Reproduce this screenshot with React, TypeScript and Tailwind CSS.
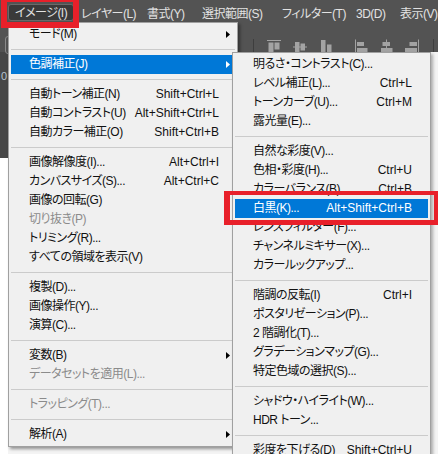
import clsx from 'clsx';

type Entry =
  | { sep: true }
  | {
      sep?: false;
      label: string;
      shortcut?: string;
      sub?: boolean;
      disabled?: boolean;
      active?: boolean;
    };

// menu bar titles with the width each one takes
const MENUBAR: [string, string][] = [
  ['イメージ(I)', 'w-[66px]'],
  ['レイヤー(L)', 'w-[66px]'],
  ['書式(Y)', 'w-[55px]'],
  ['選択範囲(S)', 'w-[80px]'],
  ['フィルター(T)', 'w-[74px]'],
  ['3D(D)', 'w-[44px]'],
  ['表示(V)', 'w-[60px]'],
];

const IMAGE_MENU: Entry[] = [
  { label: 'モード(M)', sub: true },
  { sep: true },
  { label: '色調補正(J)', sub: true, active: true },
  { sep: true },
  { label: '自動トーン補正(N)', shortcut: 'Shift+Ctrl+L' },
  { label: '自動コントラスト(U)', shortcut: 'Alt+Shift+Ctrl+L' },
  { label: '自動カラー補正(O)', shortcut: 'Shift+Ctrl+B' },
  { sep: true },
  { label: '画像解像度(I)...', shortcut: 'Alt+Ctrl+I' },
  { label: 'カンバスサイズ(S)...', shortcut: 'Alt+Ctrl+C' },
  { label: '画像の回転(G)' },
  { label: '切り抜き(P)', disabled: true },
  { label: 'トリミング(R)...' },
  { label: 'すべての領域を表示(V)' },
  { sep: true },
  { label: '複製(D)...' },
  { label: '画像操作(Y)...' },
  { label: '演算(C)...' },
  { sep: true },
  { label: '変数(B)', sub: true },
  { label: 'データセットを適用(L)...', disabled: true },
  { sep: true },
  { label: 'トラッピング(T)...', disabled: true },
  { sep: true },
  { label: '解析(A)', sub: true },
];

const ADJUST_MENU: Entry[] = [
  { label: '明るさ・コントラスト(C)...' },
  { label: 'レベル補正(L)...', shortcut: 'Ctrl+L' },
  { label: 'トーンカーブ(U)...', shortcut: 'Ctrl+M' },
  { label: '露光量(E)...' },
  { sep: true },
  { label: '自然な彩度(V)...' },
  { label: '色相・彩度(H)...', shortcut: 'Ctrl+U' },
  { label: 'カラーバランス(B)...', shortcut: 'Ctrl+B' },
  { label: '白黒(K)...', shortcut: 'Alt+Shift+Ctrl+B', active: true },
  { label: 'レンズフィルター(F)...' },
  { label: 'チャンネルミキサー(X)...' },
  { label: 'カラールックアップ...' },
  { sep: true },
  { label: '階調の反転(I)', shortcut: 'Ctrl+I' },
  { label: 'ポスタリゼーション(P)...' },
  { label: '2 階調化(T)...' },
  { label: 'グラデーションマップ(G)...' },
  { label: '特定色域の選択(S)...' },
  { sep: true },
  { label: 'シャドウ・ハイライト(W)...' },
  { label: 'HDR トーン...' },
  { sep: true },
  { label: '彩度を下げる(D)', shortcut: 'Shift+Ctrl+U' },
  { label: '色の置き換え(R)...' },
];

function SubArrow({ light }: { light?: boolean }) {
  return (
    <svg width="4" height="7" viewBox="0 0 4 7" className="ml-[7px]">
      <path d="M0 0L4 3.5L0 7Z" fill={light ? '#ffffff' : '#000000'} />
    </svg>
  );
}

function MenuList({ items }: { items: Entry[] }) {
  return (
    <div className="flex flex-col">
      {items.map((item, i) => {
        if (item.sep) {
          return (
            <div key={i} className="flex h-[11px] items-center">
              <div className="h-px w-full bg-[#cbcbcb]" />
            </div>
          );
        }
        return (
          <div
            key={i}
            className={clsx(
              'flex h-[19px] items-center pl-[18px] leading-[19px] whitespace-nowrap',
              item.active ? 'bg-[#0078d7] text-white' : item.disabled ? 'text-[#8b8b8b]' : 'text-[#111111]',
            )}
          >
            <span className="flex-1 tracking-[-0.5px]">{item.label}</span>
            {item.shortcut && <span>{item.shortcut}</span>}
            <span className="flex w-[16px] items-center">{item.sub && <SubArrow light={item.active} />}</span>
          </div>
        );
      })}
    </div>
  );
}

// alignment buttons in the options bar
function AlignIcons() {
  const c = '#a3a3a3';
  return (
    <>
      <svg width="14" height="16" className="ml-[13px] shrink-0">
        <rect x="0" y="1" width="14" height="1" fill={c} />
        <rect x="1.5" y="3.5" width="5" height="12.5" fill={c} />
        <rect x="7.5" y="3.5" width="5" height="7" fill={c} />
      </svg>
      <svg width="14" height="16" className="ml-[12px] shrink-0">
        <rect x="2" y="3" width="4.5" height="11" fill={c} />
        <rect x="7.5" y="4.5" width="4.5" height="7" fill={c} />
        <rect x="0" y="7.5" width="14" height="1" fill={c} />
      </svg>
      <svg width="11" height="16" className="ml-[14px] shrink-0">
        <rect x="0" y="1" width="4.5" height="15" fill={c} />
        <rect x="6" y="5.5" width="4.5" height="10.5" fill={c} />
      </svg>
      <svg width="13" height="16" className="ml-[23px] shrink-0">
        <rect x="0" y="0.5" width="1" height="15.5" fill={c} />
        <rect x="2" y="3" width="7" height="4" fill={c} />
        <rect x="2" y="9" width="10.5" height="4" fill={c} />
      </svg>
      <svg width="12" height="16" className="ml-[13px] shrink-0">
        <rect x="1.5" y="3" width="7.5" height="4" fill={c} />
        <rect x="0" y="9" width="11.5" height="4" fill={c} />
        <rect x="5" y="0.5" width="1" height="15.5" fill={c} />
      </svg>
      <svg width="14" height="16" className="ml-[12px] shrink-0">
        <rect x="4.5" y="3" width="7.5" height="4" fill={c} />
        <rect x="0" y="9" width="12" height="4" fill={c} />
        <rect x="13" y="0.5" width="1" height="15.5" fill={c} />
      </svg>
    </>
  );
}

export default function App() {
  return (
    <div className="relative flex h-[454px] w-[438px] flex-col overflow-hidden bg-white text-[12px] [font-family:'Liberation_Sans','Noto_Sans_CJK_JP',sans-serif] [font-feature-settings:'palt']">
      {/* Menu bar */}
      <div className="flex h-[28px] shrink-0 items-center bg-[#535353] pl-[8px]">
        {MENUBAR.map(([m, w], i) => (
          <div
            key={m}
            className={clsx(
              'flex h-[17px] shrink-0 items-center whitespace-nowrap text-[#e2e2e2] tracking-[-0.5px]',
              w,
              i === 0 ? 'mb-[3px] rounded-[3px] border border-[#6a6a6a] bg-[#3a3a3a] pl-[6px]' : 'pl-[7px]',
            )}
          >
            {m}
          </div>
        ))}
      </div>

      {/* Options bar */}
      <div className="flex h-[24px] shrink-0 items-start bg-[#535353] pt-[11px]">
        <div className="ml-[5px] h-[18px] w-[26px] shrink-0 -translate-y-[3px] rounded-[3px] border border-[#8a8a8a]" />
        <div className="ml-[222px] h-[16px] w-px shrink-0 bg-[#3e3e3e]" />
        <AlignIcons />
        <div className="ml-[14px] h-[16px] w-px shrink-0 bg-[#3e3e3e]" />
      </div>

      {/* Workspace: ruler corner on the left, document beyond */}
      <div className="flex flex-1">
        <div className="flex w-[8px] flex-col">
          <div className="h-[106px] bg-[#474747] pt-[16px] pl-[1px] text-[11px] text-[#b8c4d0]">0</div>
          <div className="flex-1 bg-white" />
        </div>
        <div className="flex-1 bg-[#f4f4f4]" />
      </div>

      {/* Image menu */}
      <div className="absolute top-[22px] left-[8px] w-[230px] border border-[#a0a0a0] bg-[#f0f0f0] p-[2px] shadow-[2px_2px_3px_rgba(0,0,0,0.4)]">
        <MenuList items={IMAGE_MENU} />
      </div>

      {/* Adjustments submenu */}
      <div className="absolute top-[52px] left-[232px] w-[199px] border border-[#a0a0a0] bg-[#f0f0f0] p-[2px] shadow-[2px_2px_3px_rgba(0,0,0,0.3)]">
        <MenuList items={ADJUST_MENU} />
      </div>

      {/* Red callouts */}
      <div className="absolute top-[-4px] left-[1px] h-[32px] w-[78px] border-[6px] border-[#e8202a]" />
      <div className="absolute top-[191px] left-[224px] h-[34px] w-[215px] border-[5px] border-t-[4px] border-l-[6px] border-[#e8202a]" />
    </div>
  );
}
